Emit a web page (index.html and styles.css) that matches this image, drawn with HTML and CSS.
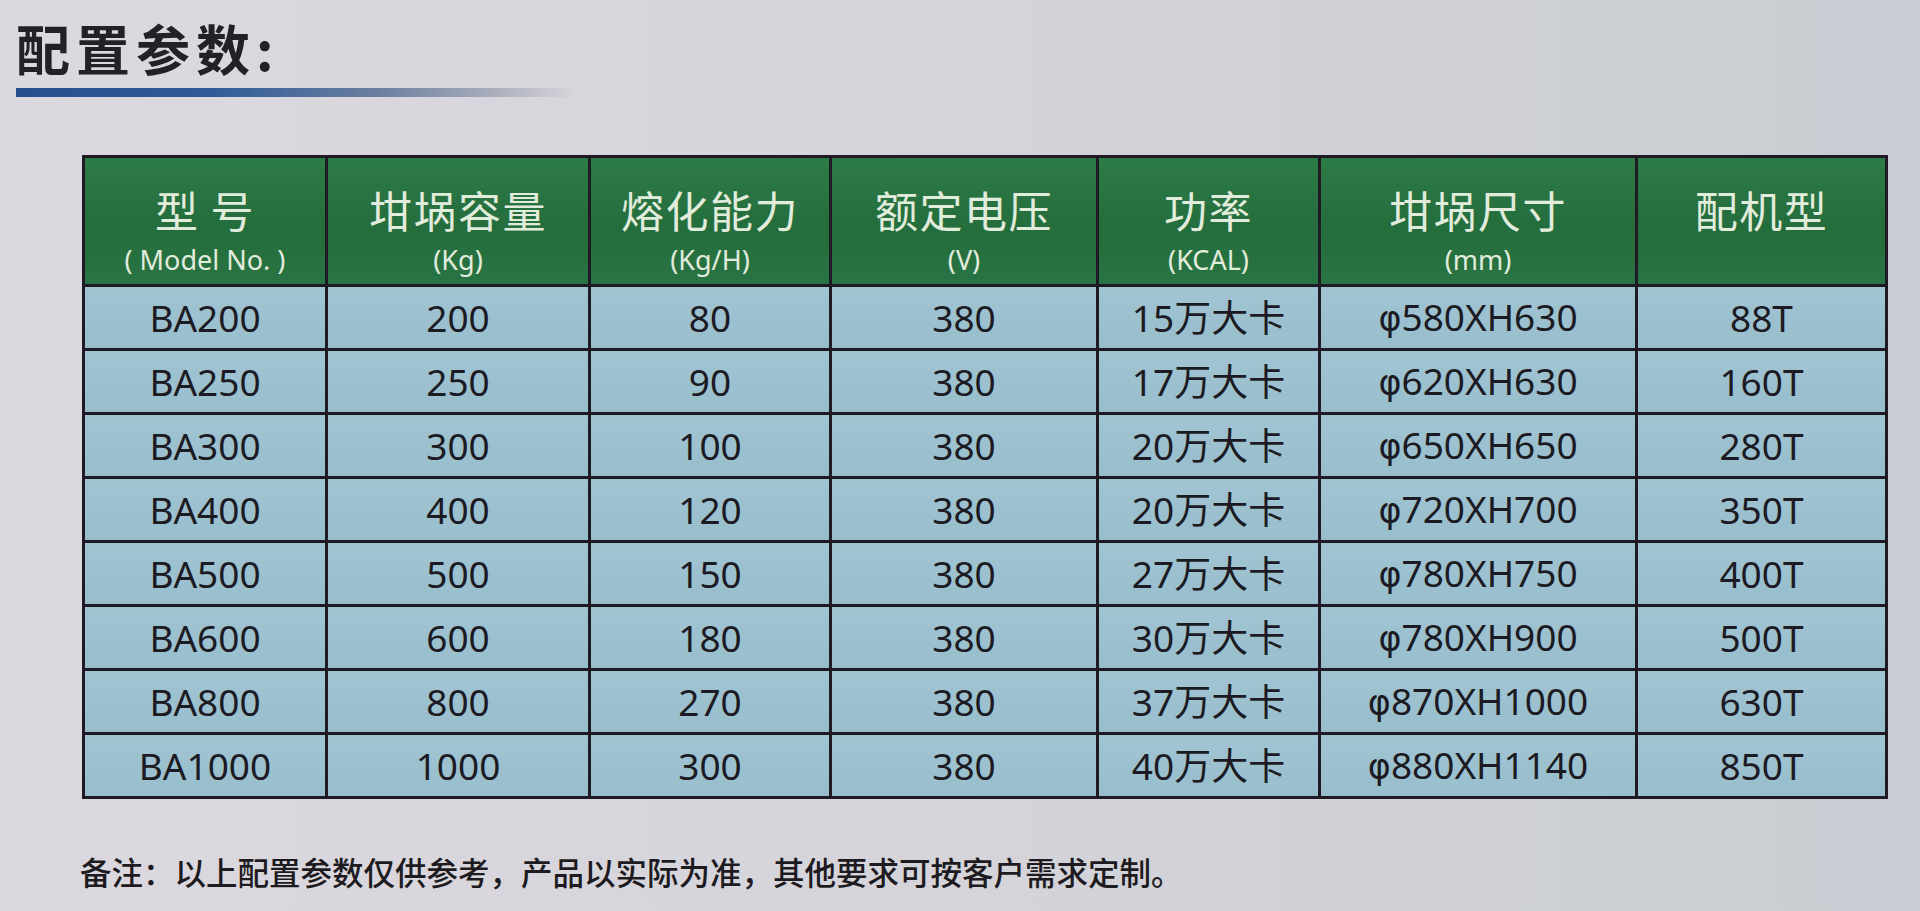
FILE: index.html
```html
<!DOCTYPE html>
<html lang="zh-CN">
<head>
<meta charset="utf-8">
<title>配置参数</title>
<link rel="stylesheet" href="styles.css">
</head>
<body>
<div class="page">
  <div class="heading">
    <h1 class="title">配置参数:</h1>
    <div class="rule"></div>
  </div>

  <table class="spec">
    <colgroup>
      <col class="c1"><col class="c2"><col class="c3"><col class="c4"><col class="c5"><col class="c6"><col class="c7">
    </colgroup>
    <thead>
      <tr>
        <th><div class="main">型 号</div><div class="sub">( Model No. )</div></th>
        <th><div class="main">坩埚容量</div><div class="sub">(Kg)</div></th>
        <th><div class="main">熔化能力</div><div class="sub">(Kg/H)</div></th>
        <th><div class="main">额定电压</div><div class="sub">(V)</div></th>
        <th><div class="main">功率</div><div class="sub">(KCAL)</div></th>
        <th><div class="main">坩埚尺寸</div><div class="sub">(mm)</div></th>
        <th><div class="main">配机型</div></th>
      </tr>
    </thead>
    <tbody>
      <tr><td>BA200</td><td>200</td><td>80</td><td>380</td><td>15万大卡</td><td><span class="phi">φ</span>580XH630</td><td>88T</td></tr>
      <tr><td>BA250</td><td>250</td><td>90</td><td>380</td><td>17万大卡</td><td><span class="phi">φ</span>620XH630</td><td>160T</td></tr>
      <tr><td>BA300</td><td>300</td><td>100</td><td>380</td><td>20万大卡</td><td><span class="phi">φ</span>650XH650</td><td>280T</td></tr>
      <tr><td>BA400</td><td>400</td><td>120</td><td>380</td><td>20万大卡</td><td><span class="phi">φ</span>720XH700</td><td>350T</td></tr>
      <tr><td>BA500</td><td>500</td><td>150</td><td>380</td><td>27万大卡</td><td><span class="phi">φ</span>780XH750</td><td>400T</td></tr>
      <tr><td>BA600</td><td>600</td><td>180</td><td>380</td><td>30万大卡</td><td><span class="phi">φ</span>780XH900</td><td>500T</td></tr>
      <tr><td>BA800</td><td>800</td><td>270</td><td>380</td><td>37万大卡</td><td><span class="phi">φ</span>870XH1000</td><td>630T</td></tr>
      <tr><td>BA1000</td><td>1000</td><td>300</td><td>380</td><td>40万大卡</td><td><span class="phi">φ</span>880XH1140</td><td>850T</td></tr>
    </tbody>
  </table>

  <p class="note">备注：以上配置参数仅供参考，产品以实际为准，其他要求可按客户需求定制。</p>
</div>
</body>
</html>
```

FILE: styles.css
```css
html, body {
  margin: 0;
  padding: 0;
}

body {
  width: 1920px;
  height: 911px;
  overflow: hidden;
  background: linear-gradient(90deg, #dcd8df 0%, #d6d5db 40%, #cfd1d6 75%, #c9ccd2 100%);
  font-family: "Noto Sans", "Noto Sans CJK SC", sans-serif;
  color: #1c1a22;
}

.page {
  padding: 20px 0 0 0;
}

.heading {
  padding-left: 16px;
}

.title {
  margin: 0;
  font-family: "Noto Sans CJK SC", sans-serif;
  font-weight: 700;
  font-size: 54px;
  line-height: 56px;
  letter-spacing: 6px;
  color: #222126;
}

.rule {
  margin-top: 12px;
  width: 560px;
  height: 9px;
  background: linear-gradient(90deg, #264f90 0%, #2f5c98 35%, #6c7fa0 65%, #a9adbb 85%, rgba(200, 200, 210, 0) 100%);
}

.spec {
  margin: 58px 0 0 82px;
  border-collapse: collapse;
  table-layout: fixed;
  width: 1803px;
  border: 3px solid #1f1a24;
}

.c1 { width: 243px; }
.c2 { width: 263px; }
.c3 { width: 241px; }
.c4 { width: 267px; }
.c5 { width: 222px; }
.c6 { width: 317px; }
.c7 { width: 250px; }

.spec th {
  height: 126px;
  padding: 0;
  vertical-align: top;
  background: linear-gradient(180deg, #2d7b47 0%, #246d3d 55%, #297444 100%);
  border: 3px solid #1f1a24;
  color: #e2ecdc;
  font-weight: 400;
  text-align: center;
}

.spec th .main {
  margin-top: 28px;
  font-family: "Noto Sans CJK SC", sans-serif;
  font-size: 43px;
  line-height: 46px;
  letter-spacing: 1.5px;
}

.spec th .sub {
  margin-top: 12px;
  font-family: "Noto Sans", "Noto Sans CJK SC", sans-serif;
  font-size: 27px;
  line-height: 32px;
}

.spec td {
  height: 61px;
  padding: 0;
  text-align: center;
  vertical-align: middle;
  background: linear-gradient(180deg, #a0c4d2 0%, #98bdcc 100%);
  border: 3px solid #1f1a24;
  font-size: 37px;
  line-height: 40px;
  color: #1c1a22;
}

.phi {
  font-family: "DejaVu Sans", sans-serif;
  font-size: 35px;
}

.note {
  margin: 52px 0 0 80px;
  font-family: "Noto Sans CJK SC", sans-serif;
  font-weight: 500;
  font-size: 31.5px;
  line-height: 40px;
  letter-spacing: 0;
  color: #1d1b20;
}
```
